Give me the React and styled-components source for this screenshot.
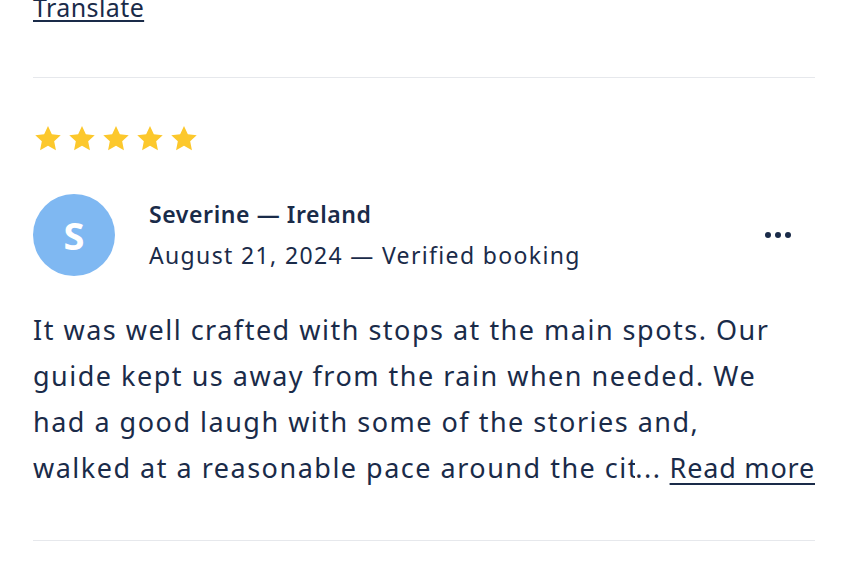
import React from 'react';
import styled, { createGlobalStyle } from 'styled-components';

const GlobalStyle = createGlobalStyle`
  html, body {
    margin: 0;
    padding: 0;
    background: #fff;
  }
  body {
    font-family: "Noto Sans", Lato, sans-serif;
    color: #1a2b49;
    overflow: hidden;
  }
`;

const Page = styled.div`
  width: 848px;
  height: 565px;
  overflow: hidden;
  padding: 0 33px;
  box-sizing: border-box;
`;

const TranslateLink = styled.a`
  display: inline-block;
  margin-top: -12px;
  font-size: 25px;
  line-height: 34px;
  letter-spacing: 0.4px;
  color: #1a2b49;
  text-decoration: underline;
  text-underline-offset: 3px;
  text-decoration-thickness: 2px;
`;

const Divider = styled.hr`
  border: 0;
  border-top: 1px solid #e6e8ec;
  margin: ${p => p.$top}px 0 0;
`;

const Review = styled.section`
  padding-top: 47px;
`;

const Stars = styled.div`
  display: flex;
  gap: 6px;
  margin-left: 1px;
`;

const Header = styled.div`
  display: flex;
  align-items: center;
  margin-top: 42px;
`;

const Avatar = styled.div`
  width: 82px;
  height: 82px;
  border-radius: 50%;
  background: #7fb8f2;
  color: #fff;
  display: flex;
  align-items: center;
  justify-content: center;
  font-size: 38px;
  font-weight: 700;
  flex-shrink: 0;
`;

const Meta = styled.div`
  flex: 1;
  margin-left: 34px;
  margin-top: -2px;
`;

const Name = styled.div`
  font-size: 23px;
  font-weight: 600;
  line-height: 36px;
  letter-spacing: 0.6px;
`;

const Sub = styled.div`
  font-size: 23px;
  line-height: 36px;
  margin-top: 5px;
  letter-spacing: 1.35px;
`;

const MoreButton = styled.button`
  border: 0;
  background: none;
  padding: 0;
  margin-right: 24px;
  display: flex;
  gap: 4px;
  cursor: pointer;
`;

const Dot = styled.span`
  width: 6px;
  height: 6px;
  border-radius: 50%;
  background: #1a2b49;
`;

const Body = styled.div`
  margin-top: 31px;
  font-size: 27px;
  line-height: 46px;
  letter-spacing: 1.5px;
  white-space: nowrap;
`;

const LastLine = styled.div`
  display: flex;
`;

const Clipped = styled.span`
  flex: 1;
  min-width: 0;
  overflow: hidden;
`;

const ReadMore = styled.a`
  margin-left: 8px;
  letter-spacing: 0.8px;
  color: #1a2b49;
  text-decoration: underline;
  text-underline-offset: 5px;
  text-decoration-thickness: 2px;
`;

const Star = () => (
  <svg width="28" height="27" viewBox="0 0 24 23">
    <path
      d="M12 .8l3.3 7 7.6.9-5.6 5.2 1.5 7.6L12 17.7l-6.8 3.8 1.5-7.6L1.1 8.7l7.6-.9z"
      fill="#fcc82c"
    />
  </svg>
);

export default function App() {
  return (
    <Page>
      <GlobalStyle />
      <TranslateLink href="#">Translate</TranslateLink>
      <Divider $top={53} />
      <Review>
        <Stars>
          {[0, 1, 2, 3, 4].map(i => <Star key={i} />)}
        </Stars>
        <Header>
          <Avatar>S</Avatar>
          <Meta>
            <Name>Severine — Ireland</Name>
            <Sub>August 21, 2024 — Verified booking</Sub>
          </Meta>
          <MoreButton aria-label="More">
            <Dot /><Dot /><Dot />
          </MoreButton>
        </Header>
        <Body>
          It was well crafted with stops at the main spots. Our<br />
          guide kept us away from the rain when needed. We<br />
          had a good laugh with some of the stories and,<br />
          <LastLine>
            <Clipped>walked at a reasonable pace around the city</Clipped>
            <span>...</span>
            <ReadMore href="#">Read more</ReadMore>
          </LastLine>
        </Body>
        <Divider $top={49} />
      </Review>
    </Page>
  );
}
